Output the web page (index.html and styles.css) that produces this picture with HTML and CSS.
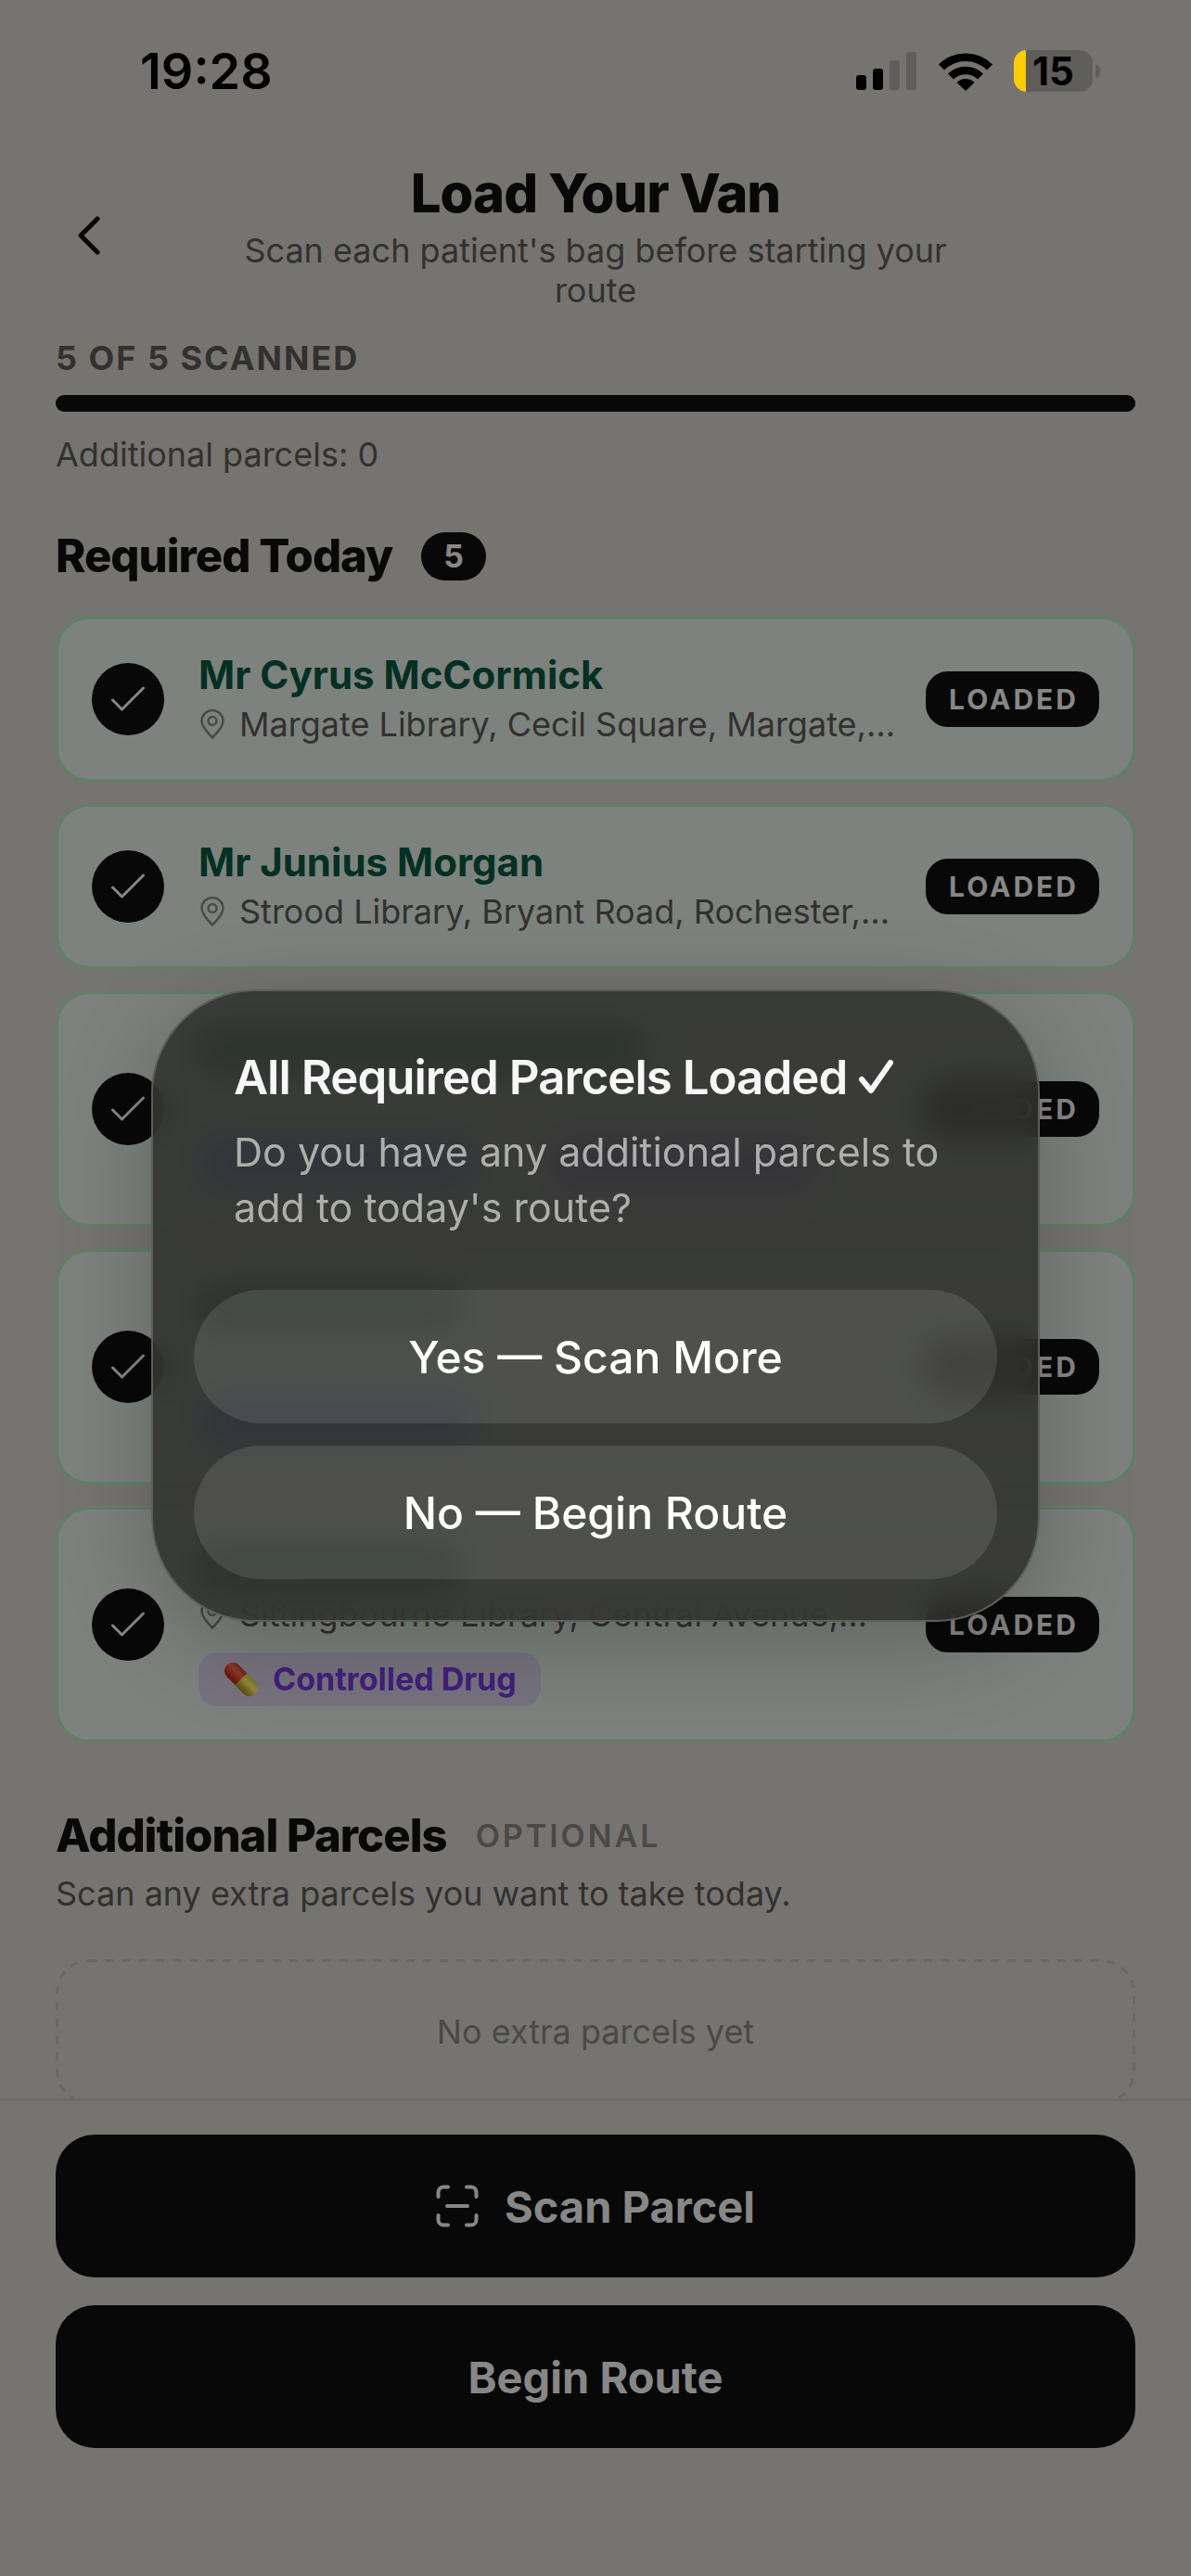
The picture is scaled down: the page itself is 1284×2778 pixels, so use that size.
FILE: index.html
```html
<!DOCTYPE html>
<html lang="en">
<head>
<meta charset="utf-8">
<title>Load Your Van</title>
<meta name="viewport" content="width=device-width, initial-scale=1.0">
<link rel="stylesheet" href="styles.css">
</head>
<body>
<svg class="defs" width="0" height="0">
	<symbol id="check" viewBox="0 0 36 28"><path d="M1.500 15l10 10L34.500 2" fill="none" stroke="currentColor" stroke-width="3" stroke-linecap="round" stroke-linejoin="round"/></symbol>
	<symbol id="pin" viewBox="0 0 26 32"><path d="M13 30.500C9 26.500 1.500 19 1.500 12.500a11.500 11.500 0 0 1 23 0C24.500 19 17 26.500 13 30.500z" fill="none" stroke="currentColor" stroke-width="2.500" stroke-linejoin="round"/><circle cx="13" cy="12.500" r="4.500" fill="none" stroke="currentColor" stroke-width="2.500"/></symbol>
</svg>

<div class="app">
	<div class="status">
		<span class="time">19:28</span>
		<div class="status-icons">
			<svg width="66" height="42" viewBox="0 0 66 42">
				<rect x="0" y="25" width="11" height="16" rx="3"/>
				<rect x="18" y="18" width="11" height="23" rx="3"/>
				<rect class="off" x="36" y="9" width="11" height="32" rx="3"/>
				<rect class="off" x="54" y="0" width="11" height="41" rx="3"/>
			</svg>
			<svg width="58" height="42" viewBox="0 0 58 42">
				<path d="M0 13.500a41 41 0 0 1 58 0l-6 6a32.500 32.500 0 0 0-46 0z"/>
				<path d="M10 23.500a27 27 0 0 1 38 0l-6 6a18.500 18.500 0 0 0-26 0z"/>
				<path d="M19.500 33a13.500 13.500 0 0 1 19 0L29 42z"/>
			</svg>
			<div class="battery"><span>15</span></div>
		</div>
	</div>

	<header class="top">
		<button class="back" aria-label="Back">
			<svg width="26" height="42" viewBox="0 0 26 42"><path d="M22 3L4 21l18 18" fill="none" stroke="currentColor" stroke-width="5" stroke-linecap="round" stroke-linejoin="round"/></svg>
		</button>
		<div class="top-text">
			<h1>Load Your Van</h1>
			<p>Scan each patient's bag before starting your route</p>
		</div>
	</header>

	<main class="content">
		<div class="count">5 OF 5 SCANNED</div>
		<div class="bar"><div class="bar-fill" style="width:100%"></div></div>
		<p class="note">Additional parcels: 0</p>

		<div class="heading">
			<h2>Required Today</h2>
			<span class="num">5</span>
		</div>

		<div class="cards">
			<div class="card">
				<span class="tick"><svg width="38" height="28"><use href="#check"/></svg></span>
				<div class="info">
					<h3>Mr Cyrus McCormick</h3>
					<p class="addr"><svg width="26" height="32"><use href="#pin"/></svg>Margate Library, Cecil Square, Margate,…</p>
				</div>
				<span class="loaded">LOADED</span>
			</div>
			<div class="card">
				<span class="tick"><svg width="38" height="28"><use href="#check"/></svg></span>
				<div class="info">
					<h3>Mr Junius Morgan</h3>
					<p class="addr"><svg width="26" height="32"><use href="#pin"/></svg>Strood Library, Bryant Road, Rochester,…</p>
				</div>
				<span class="loaded">LOADED</span>
			</div>
			<div class="card">
				<span class="tick"><svg width="38" height="28"><use href="#check"/></svg></span>
				<div class="info">
					<div class="name-fill long"></div>
					<div class="addr-fill"></div>
					<div class="tags"><span class="tag fridge"></span><span class="tag drug-fill"></span></div>
				</div>
				<span class="loaded">LOADED</span>
			</div>
			<div class="card">
				<span class="tick"><svg width="38" height="28"><use href="#check"/></svg></span>
				<div class="info">
					<div class="name-fill"></div>
					<div class="addr-fill"></div>
					<div class="tags"><span class="tag fridge"></span></div>
				</div>
				<span class="loaded">LOADED</span>
			</div>
			<div class="card">
				<span class="tick"><svg width="38" height="28"><use href="#check"/></svg></span>
				<div class="info">
					<div class="name-fill"></div>
					<p class="addr"><svg width="26" height="32"><use href="#pin"/></svg>Sittingbourne Library, Central Avenue,…</p>
					<div class="tags">
						<span class="tag drug">
							<svg width="40" height="40" viewBox="0 0 40 40">
								<defs>
									<linearGradient id="red" x1="0" y1="0" x2="0" y2="1"><stop offset="0" stop-color="#6e2115"/><stop offset=".35" stop-color="#8c3a2c"/><stop offset="1" stop-color="#6a120a"/></linearGradient>
									<linearGradient id="yellow" x1="0" y1="0" x2="0" y2="1"><stop offset="0" stop-color="#7d741f"/><stop offset=".35" stop-color="#938a3c"/><stop offset="1" stop-color="#5c4a08"/></linearGradient>
								</defs>
								<g transform="rotate(46 20 20)">
									<path d="M20 11H7a9 9 0 0 0 0 18h13z" fill="url(#red)"/>
									<path d="M20 11h13a9 9 0 0 1 0 18H20z" fill="url(#yellow)"/>
								</g>
							</svg>
							Controlled Drug
						</span>
					</div>
				</div>
				<span class="loaded">LOADED</span>
			</div>
		</div>

		<div class="heading extra">
			<h2>Additional Parcels</h2>
			<span class="optional">OPTIONAL</span>
		</div>
		<p class="sub">Scan any extra parcels you want to take today.</p>
		<div class="empty">
			<svg class="dashes"><rect width="100%" height="100%" rx="36"/></svg>
			No extra parcels yet
		</div>
	</main>

	<footer class="actions">
		<button class="button">
			<svg width="46" height="46" viewBox="0 0 46 46"><path d="M2.500 13V8a5.500 5.500 0 0 1 5.500-5.500h5M33 2.500h5A5.500 5.500 0 0 1 43.500 8v5M43.500 33v5a5.500 5.500 0 0 1-5.500 5.500h-5M13 43.500H8A5.500 5.500 0 0 1 2.500 38v-5M12 23h22" fill="none" stroke="currentColor" stroke-width="4" stroke-linecap="round"/></svg>
			Scan Parcel
		</button>
		<button class="button">Begin Route</button>
	</footer>
</div>

<div class="overlay">
	<div class="dialog" role="dialog" aria-labelledby="dlg-title">
		<div class="dialog-text">
			<h2 id="dlg-title">All Required Parcels Loaded <svg width="40" height="38" viewBox="0 0 40 38"><path d="M4 22l10 12L35 4" fill="none" stroke="currentColor" stroke-width="6" stroke-linecap="round" stroke-linejoin="round"/></svg></h2>
			<p>Do you have any additional parcels to add to today's route?</p>
		</div>
		<button class="choice">Yes — Scan More</button>
		<button class="choice">No — Begin Route</button>
	</div>
</div>
</body>
</html>
```
FILE: styles.css
```css
* {
	box-sizing: border-box;
	margin: 0;
	padding: 0;
}
:root {
	--bg: #767470;
	--ink: #080808;
	--muted: #32312e;
	--faint: #4a4945;
	--light: #878787;
	--card: #7d827e;
	--green: #608068;
}
body {
	background: var(--bg);
	color: var(--ink);
	font-family: Inter, "Liberation Sans", sans-serif;
	font-size: 36px;
	line-height: 46px;
}
button {
	font-family: inherit;
	border: none;
	background: none;
}
.defs {
	position: absolute;
}
.app {
	display: flex;
	flex-direction: column;
	height: 100vh;
}

/* status bar */
.status {
	display: flex;
	justify-content: space-between;
	align-items: center;
	height: 153px;
	padding: 0 98px 0 151px;
	color: #000;
}
.time {
	font-size: 54px;
	font-weight: 600;
}
.status-icons {
	display: flex;
	align-items: center;
	gap: 23px;
}
.status-icons .off {
	fill: #5f5e5a;
}
.battery {
	position: relative;
	width: 85px;
	height: 45px;
	margin-right: 8px;
	border-radius: 14px;
	background: linear-gradient(90deg, #fc0 13px, #5f5e5a 13px);
	font-size: 42px;
	line-height: 45px;
	font-weight: 700;
	text-align: center;
}
.battery::after {
	content: "";
	position: absolute;
	left: 88px;
	top: 16px;
	width: 5px;
	height: 14px;
	border-radius: 0 7px 7px 0;
	background: #5f5e5a;
}

/* header */
.top {
	display: grid;
	grid-template-columns: 120px 1fr 120px;
	align-items: center;
	padding: 20px 120px 0;
}
.back {
	width: 72px;
	height: 72px;
	margin-left: -60px;
	color: var(--ink);
}
.back svg {
	display: block;
	margin: 0 auto;
}
.top-text {
	text-align: center;
}
h1 {
	font-size: 58px;
	line-height: 70px;
	font-weight: 800;
	letter-spacing: -1px;
	margin-bottom: 6px;
}
.top p {
	line-height: 43px;
	color: var(--muted);
}

/* scrolling content */
.content {
	flex: 1;
	min-height: 0;
	overflow: hidden;
	padding: 28px 60px 0;
}
.count {
	font-weight: 700;
	letter-spacing: 2px;
	color: var(--muted);
}
.bar {
	height: 18px;
	margin: 17px 0 23px;
	border-radius: 9px;
	background: #6b6a66;
}
.bar-fill {
	height: 18px;
	border-radius: 9px;
	background: var(--ink);
}
.note, .sub {
	color: var(--muted);
}
.heading {
	display: flex;
	align-items: center;
	gap: 31px;
	margin: 58px 0 36px;
}
h2 {
	font-size: 49px;
	line-height: 58px;
	font-weight: 800;
	letter-spacing: -1px;
}
.num {
	padding: 3px 24px;
	border-radius: 26px;
	background: var(--ink);
	color: var(--light);
	font-size: 34px;
	font-weight: 700;
}
.cards {
	display: grid;
	grid-template-columns: minmax(0, 1fr);
	gap: 24px;
}
.card {
	display: flex;
	align-items: center;
	padding: 36px;
	border: 3px solid var(--green);
	border-radius: 36px;
	background: var(--card);
}
.tick {
	display: flex;
	align-items: center;
	justify-content: center;
	flex: none;
	width: 78px;
	height: 78px;
	margin-right: 37px;
	border-radius: 50%;
	background: var(--ink);
	color: var(--light);
}
.info {
	flex: 1;
	min-width: 0;
}
h3 {
	font-size: 42px;
	line-height: 48px;
	font-weight: 700;
	color: #033022;
	margin-bottom: 6px;
}
.addr {
	display: flex;
	align-items: center;
	gap: 16px;
	color: var(--muted);
	white-space: nowrap;
}
.addr svg {
	flex: none;
	margin-left: 2px;
	color: #4a4a47;
}
.name-fill {
	width: 280px;
	height: 48px;
	margin-bottom: 6px;
	background: #23483c;
}
.name-fill.long {
	width: 480px;
}
.addr-fill {
	height: 46px;
}
.tags {
	display: flex;
	gap: 80px;
	margin-top: 18px;
}
.tag {
	height: 58px;
	border-radius: 20px;
}
.fridge {
	width: 300px;
	background: #4a5590;
}
.drug-fill {
	width: 290px;
	background: #624f88;
}
.drug {
	display: flex;
	align-items: center;
	gap: 14px;
	padding: 0 26px;
	background: #77737e;
	color: #41207c;
	font-size: 34px;
	font-weight: 700;
}
.loaded {
	height: 60px;
	margin-left: 24px;
	padding: 0 22px 0 25px;
	border-radius: 24px;
	background: var(--ink);
	color: var(--light);
	font-size: 30px;
	line-height: 60px;
	font-weight: 700;
	letter-spacing: 3px;
}
.extra {
	margin: 72px 0 10px;
}
.optional {
	font-size: 34px;
	font-weight: 600;
	letter-spacing: 3px;
	color: var(--faint);
}
.empty {
	position: relative;
	margin-top: 48px;
	padding: 55px 0;
	text-align: center;
	color: var(--faint);
}
.dashes {
	position: absolute;
	inset: 0;
	width: 100%;
	height: 100%;
	border-radius: 36px;
	fill: none;
	stroke: #696863;
	stroke-width: 6;
	stroke-dasharray: 9 9;
}

/* bottom buttons */
.actions {
	display: grid;
	gap: 30px;
	padding: 36px 60px 138px;
	border-top: 3px solid #6d6c68;
}
.button {
	display: flex;
	align-items: center;
	justify-content: center;
	gap: 28px;
	height: 154px;
	border-radius: 42px;
	background: var(--ink);
	color: var(--light);
	font-size: 47px;
	font-weight: 700;
}

/* alert */
.overlay {
	position: fixed;
	inset: 0;
	display: flex;
	align-items: center;
	justify-content: center;
	padding: 38px 163px 0;
}
.dialog {
	display: grid;
	gap: 24px;
	width: 100%;
	padding: 62px 44px 44px;
	border: 2px solid #5c5e5a;
	border-radius: 112px;
	background: rgba(46, 47, 44, .85);
	backdrop-filter: blur(18px);
	box-shadow: 0 24px 100px rgba(0, 0, 0, .22);
}
.dialog-text {
	padding: 0 43px;
	margin-bottom: 35px;
	color: #f7f7f7;
}
.dialog h2 {
	font-size: 51px;
	line-height: 62px;
	font-weight: 600;
	letter-spacing: -1px;
	margin-bottom: 19px;
}
.dialog p {
	font-size: 43px;
	line-height: 60px;
	color: #aeaeac;
}
.choice {
	height: 144px;
	border-radius: 72px;
	background: rgba(255, 255, 255, .11);
	color: #fff;
	font-size: 48px;
	font-weight: 500;
}
```
